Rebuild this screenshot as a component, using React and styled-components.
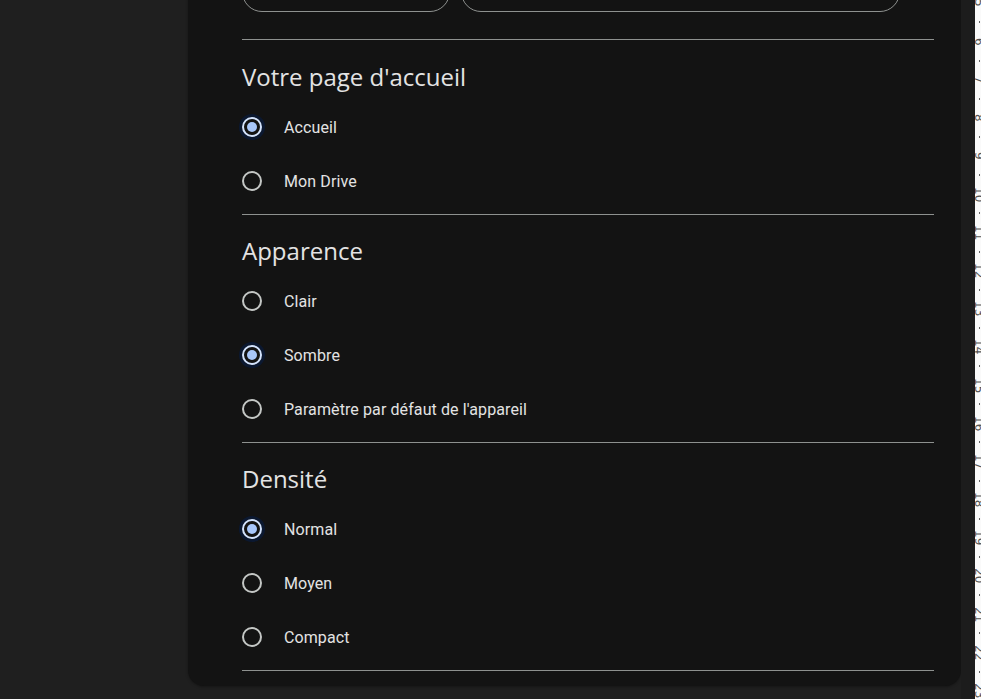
import React from 'react';
import styled, { createGlobalStyle } from 'styled-components';

const Global = createGlobalStyle`
  html, body {
    margin: 0;
    padding: 0;
    background: #1f1f1f;
    overflow: hidden;
  }
  body {
    font-family: Roboto, "Liberation Sans", sans-serif;
    color: #e3e3e3;
  }
`;

const Page = styled.div`
  display: flex;
  height: 699px;
  overflow: hidden;
`;

const Gutter = styled.div`
  width: 188px;
  flex-shrink: 0;
`;

const Panel = styled.div`
  width: 773px;
  flex-shrink: 0;
  align-self: flex-start;
  margin-top: -28px;
  padding: 0 27px 15px 54px;
  box-sizing: border-box;
  background: #131313;
  border-radius: 16px;
  box-shadow: 0 1px 3px rgba(0, 0, 0, 0.35);
`;

const Track = styled.div`
  width: 14px;
  flex-shrink: 0;
  background: #1c1c1c;
`;

const Ruler = styled.div`
  width: 6px;
  flex-shrink: 0;
  background: #fafafa;
  overflow: hidden;
  margin-top: -54px;
`;

const Mark = styled.div`
  width: 13px;
  height: 38.2px;
  margin-left: -3px;
  position: relative;
  writing-mode: vertical-rl;
  text-align: center;
  white-space: nowrap;
  font-family: "DejaVu Sans", sans-serif;
  font-size: 12px;
  line-height: 13px;
  color: #555;
  -webkit-font-smoothing: antialiased;

  &::after {
    content: '';
    position: absolute;
    left: 7px;
    bottom: -1px;
    width: 1px;
    height: 2px;
    background: #666;
  }
`;

const Buttons = styled.div`
  display: flex;
  gap: 11px;
  padding-bottom: 27px;
`;

const Pill = styled.div`
  height: 40px;
  width: ${p => p.$w}px;
  box-sizing: border-box;
  border: 1px solid #8e918f;
  border-radius: 20px;
`;

const Divider = styled.hr`
  border: none;
  height: 1px;
  margin: 0;
  background: #8e918f;
`;

const Section = styled.section`
  padding: ${p => (p.$first ? 23 : 22)}px 0 6px;
`;

const Heading = styled.h2`
  margin: 0 0 9px;
  font-family: "Open Sans", Roboto, sans-serif;
  font-size: 24px;
  font-weight: 400;
  line-height: 28px;
  color: #e3e3e3;
`;

const Option = styled.label`
  display: flex;
  align-items: center;
  gap: 22px;
  height: 54px;
  font-size: 16px;
  letter-spacing: 0.1px;
  color: #e3e3e3;
  cursor: pointer;
`;

const Radio = styled.span`
  width: 20px;
  height: 20px;
  box-sizing: border-box;
  border-radius: 50%;
  border: 2px solid ${p => (p.$on ? '#d3e3fd' : '#c4c7c5')};
  display: flex;
  align-items: center;
  justify-content: center;
  box-shadow: ${p => (p.$on ? '0 0 0 3px #0b1830' : 'none')};

  &::after {
    content: '';
    width: 10px;
    height: 10px;
    border-radius: 50%;
    background: #a8c7fa;
    display: ${p => (p.$on ? 'block' : 'none')};
  }
`;

const groups = [
  { title: "Votre page d'accueil", options: ['Accueil', 'Mon Drive'], on: 0, first: true },
  { title: 'Apparence', options: ['Clair', 'Sombre', "Paramètre par défaut de l'appareil"], on: 1 },
  { title: 'Densité', options: ['Normal', 'Moyen', 'Compact'], on: 0 },
];

const marks = Array.from({ length: 21 }, (_, i) => i + 4);

export default function App() {
  return (
    <>
      <Global />
      <Page>
        <Gutter />
        <Panel>
          <Buttons>
            <Pill $w={208} />
            <Pill $w={439} />
          </Buttons>
          {groups.map(g => (
            <React.Fragment key={g.title}>
              <Divider />
              <Section $first={g.first}>
                <Heading>{g.title}</Heading>
                {g.options.map((o, i) => (
                  <Option key={o}>
                    <Radio $on={i === g.on} />
                    {o}
                  </Option>
                ))}
              </Section>
            </React.Fragment>
          ))}
          <Divider />
        </Panel>
        <Track />
        <Ruler>
          {marks.map(m => (
            <Mark key={m}>{m}</Mark>
          ))}
        </Ruler>
      </Page>
    </>
  );
}
